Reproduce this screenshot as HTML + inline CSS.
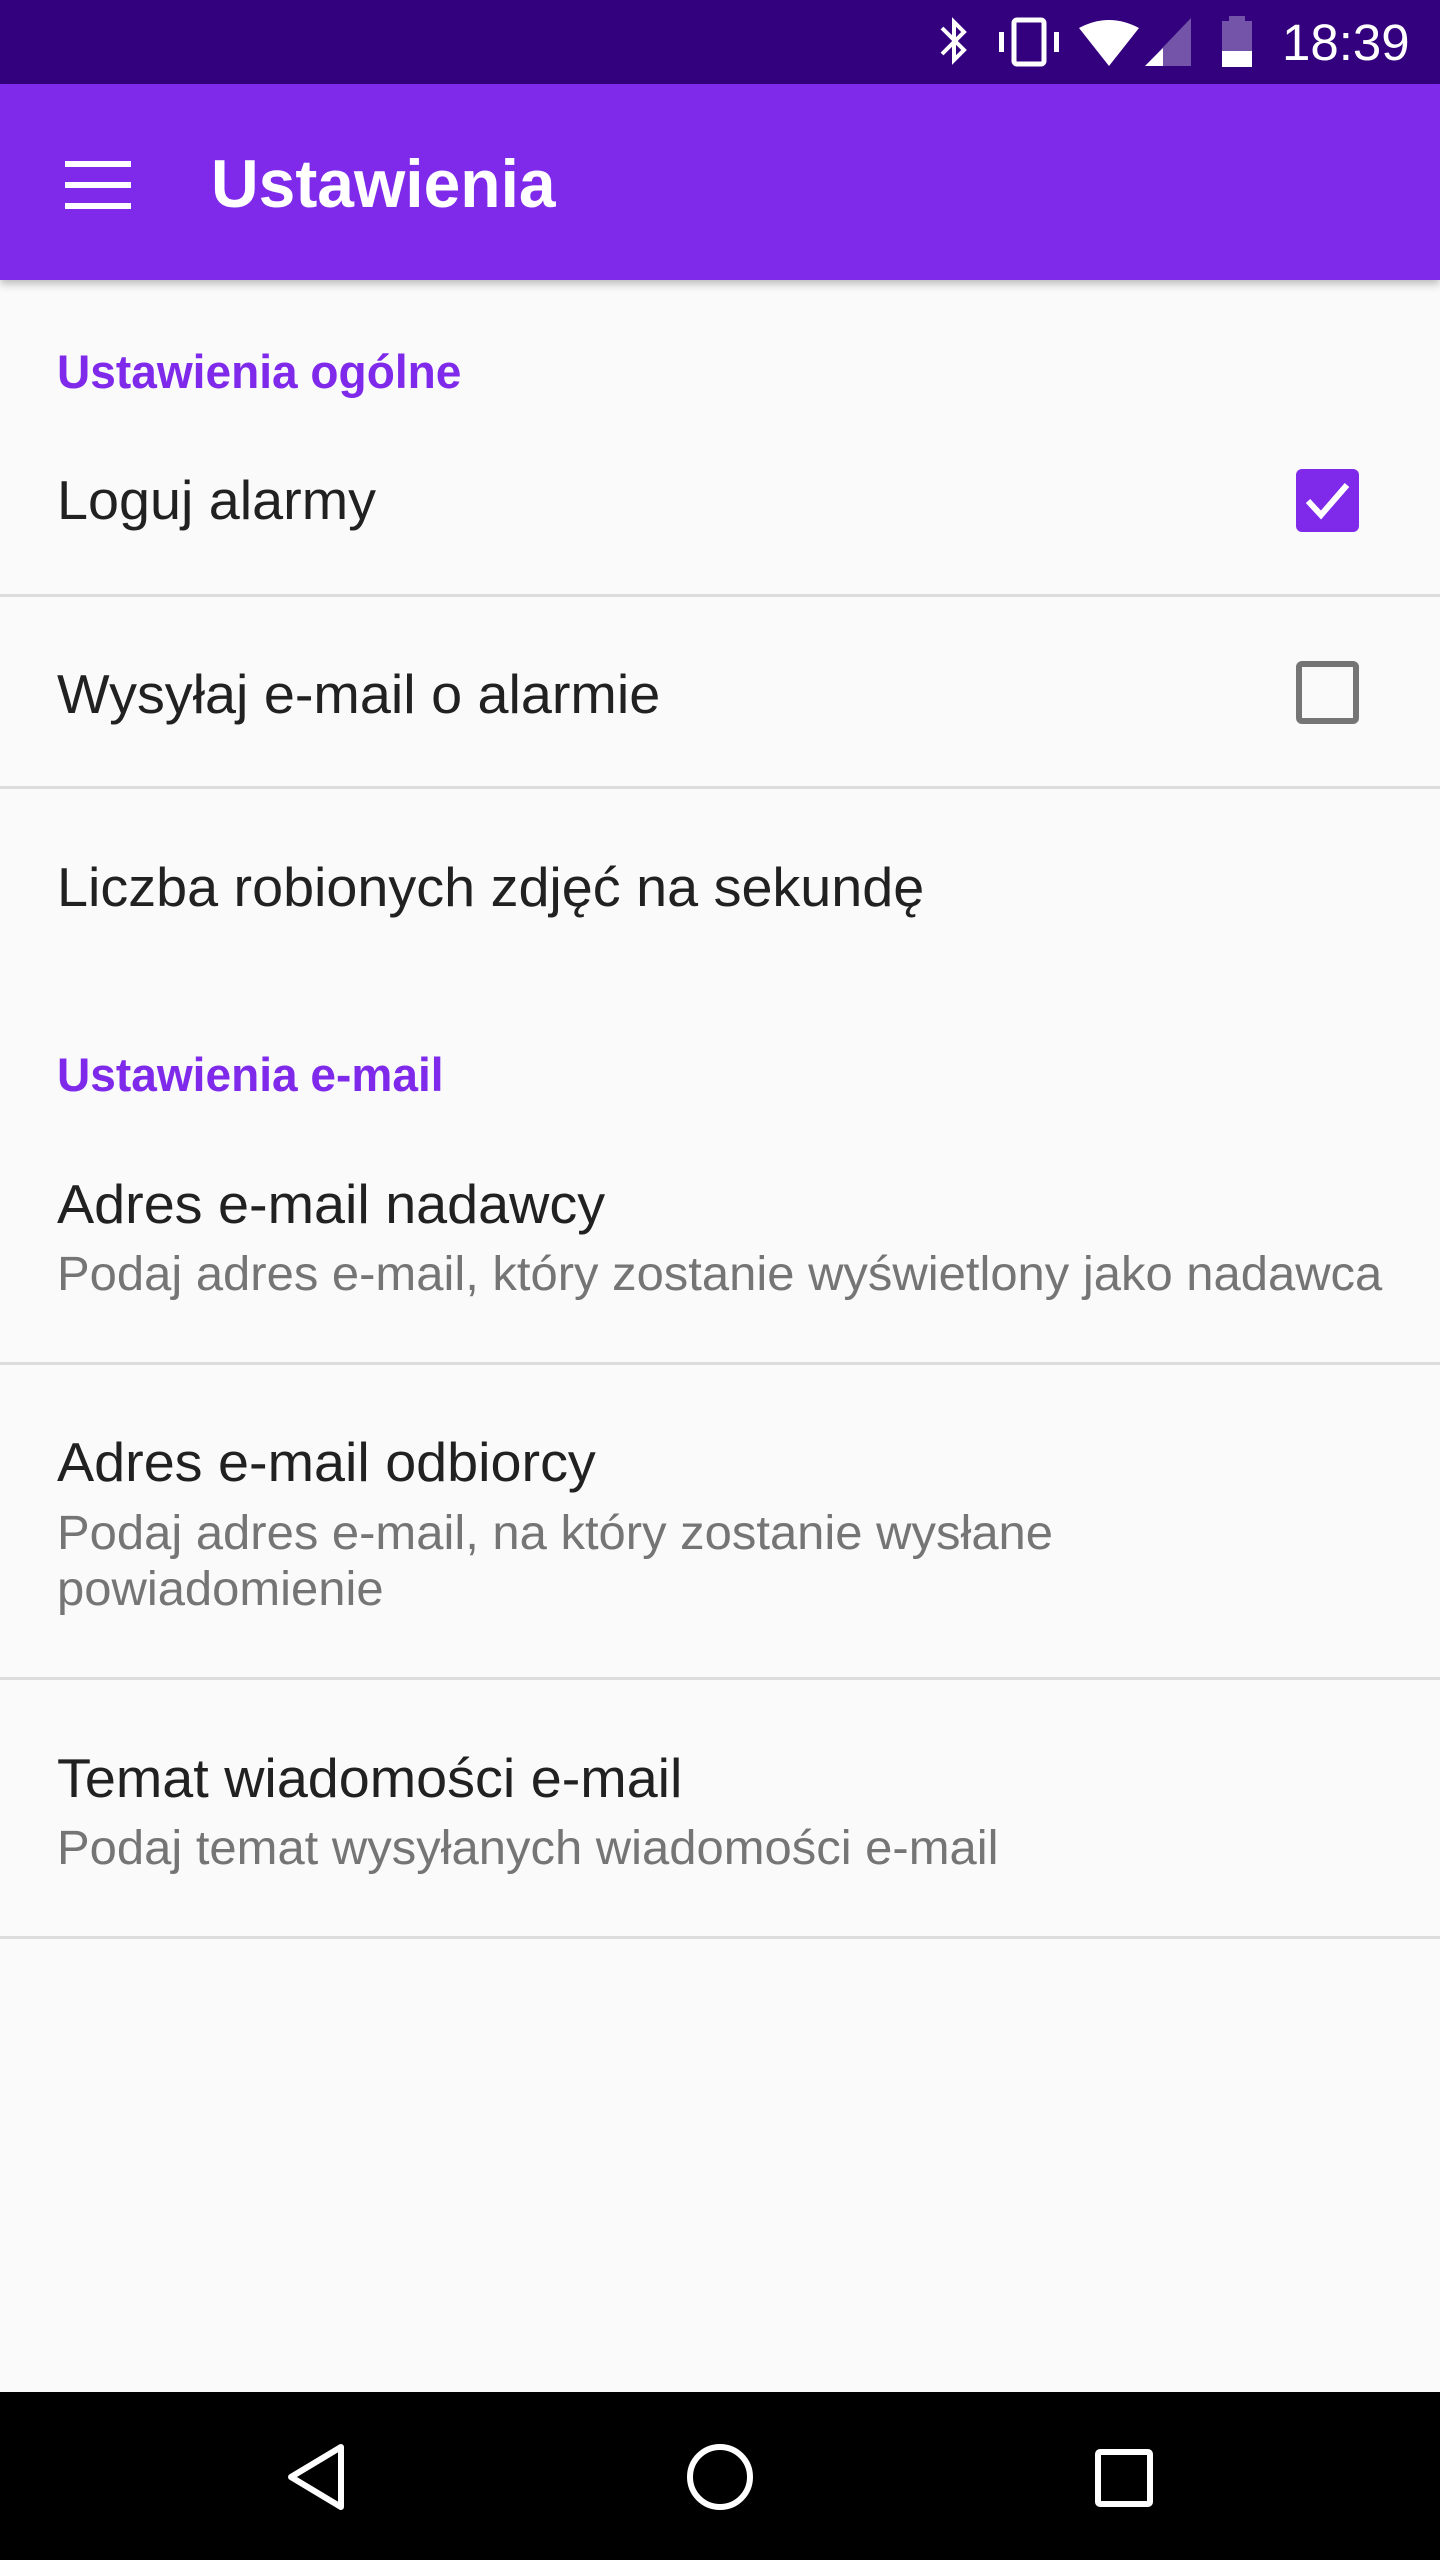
<!DOCTYPE html>
<html><head><meta charset="utf-8"><style>
*{margin:0;padding:0;box-sizing:border-box}
body{width:1440px;height:2560px;background:#fafafa;position:relative;overflow:hidden;font-family:"Liberation Sans",sans-serif}
.sb{position:absolute;left:0;top:0;width:1440px;height:84px;background:#33007e}
.ab{position:absolute;left:0;top:84px;width:1440px;height:196px;background:#7f2aeb;box-shadow:0 4px 8px rgba(0,0,0,.25)}
.t{position:absolute;left:57px;white-space:nowrap;transform-origin:left center;transform:scaleX(1.0);line-height:1}
.p{font-size:55px;color:#212121;transform:scaleX(1.013)}
.s{font-size:48px;color:#757575;transform:scaleX(1.02)}
.c{font-size:47px;color:#7f2aeb;font-weight:bold;transform:scaleX(.98)}
.d{position:absolute;left:0;width:1440px;height:3px;background:#dcdcdc}
.nav{position:absolute;left:0;top:2392px;width:1440px;height:168px;background:#000}
</style></head><body>
<div class="sb">
<svg style="position:absolute;left:934px;top:14px" width="40" height="56" viewBox="0 0 40 56"><path d="M8 14 L30 36 L20 46 L20 8 L30 18 L8 40" stroke="#fff" stroke-width="4" fill="none"/></svg>
<svg style="position:absolute;left:997px;top:16px" width="66" height="52" viewBox="0 0 66 52"><rect x="17" y="4" width="30" height="44" rx="3" stroke="#fff" stroke-width="5" fill="none"/><rect x="2" y="16" width="5" height="20" fill="#fff"/><rect x="57" y="16" width="5" height="20" fill="#fff"/></svg>
<svg style="position:absolute;left:1077px;top:16px" width="64" height="52" viewBox="0 0 64 52"><path d="M2 12 Q32 -4 62 12 L32 50 Z" fill="#fff"/></svg>
<svg style="position:absolute;left:1143px;top:16px" width="50" height="52" viewBox="0 0 50 52"><path d="M48 2 L48 50 L2 50 Z" fill="#7454a8"/><path d="M20 32 L20 50 L2 50 Z" fill="#fff"/></svg>
<svg style="position:absolute;left:1220px;top:14px" width="34" height="56" viewBox="0 0 34 56"><rect x="9" y="2" width="16" height="6" fill="#7454a8"/><rect x="2" y="7" width="30" height="46" fill="#7454a8"/><rect x="2" y="37" width="30" height="16" fill="#fff"/></svg>
<div style="position:absolute;left:1282px;top:17px;font-size:51px;color:#fff;line-height:1">18:39</div>
</div>
<div class="ab">
<div style="position:absolute;left:65px;top:77px;width:66px;height:6px;background:#fff"></div>
<div style="position:absolute;left:65px;top:98px;width:66px;height:6px;background:#fff"></div>
<div style="position:absolute;left:65px;top:119px;width:66px;height:6px;background:#fff"></div>
<div class="t" style="left:211px;top:66px;font-size:68px;color:#fff;font-weight:bold;transform:scaleX(.97)">Ustawienia</div>
</div>
<div class="t c" style="top:348px">Ustawienia ogólne</div>
<div class="t p" style="top:473px">Loguj alarmy</div>
<div style="position:absolute;left:1296px;top:469px;width:63px;height:63px;border-radius:6px;background:#7f2aeb"></div>
<svg style="position:absolute;left:1296px;top:469px" width="63" height="63" viewBox="0 0 63 63"><path d="M12 32 L25 46 L51 16" stroke="#fff" stroke-width="6" fill="none"/></svg>
<div class="d" style="top:594px"></div>
<div class="t p" style="top:667px">Wysyłaj e-mail o alarmie</div>
<div style="position:absolute;left:1296px;top:661px;width:63px;height:63px;border-radius:6px;border:6px solid #757575"></div>
<div class="d" style="top:786px"></div>
<div class="t p" style="top:860px">Liczba robionych zdjęć na sekundę</div>
<div class="t c" style="top:1051px">Ustawienia e-mail</div>
<div class="t p" style="top:1177px">Adres e-mail nadawcy</div>
<div class="t s" style="top:1251px">Podaj adres e-mail, który zostanie wyświetlony jako nadawca</div>
<div class="d" style="top:1362px"></div>
<div class="t p" style="top:1435px">Adres e-mail odbiorcy</div>
<div class="t s" style="top:1510px">Podaj adres e-mail, na który zostanie wysłane</div>
<div class="t s" style="top:1566px">powiadomienie</div>
<div class="d" style="top:1677px"></div>
<div class="t p" style="top:1751px">Temat wiadomości e-mail</div>
<div class="t s" style="top:1825px">Podaj temat wysyłanych wiadomości e-mail</div>
<div class="d" style="top:1936px"></div>
<div class="nav">
<svg style="position:absolute;left:285px;top:50px" width="64" height="70" viewBox="0 0 64 70"><path d="M56 5 L56 65 L6 35 Z" stroke="#fff" stroke-width="6" fill="none" stroke-linejoin="round"/></svg>
<svg style="position:absolute;left:684px;top:49px" width="72" height="72" viewBox="0 0 72 72"><circle cx="36" cy="36" r="30" stroke="#fff" stroke-width="6" fill="none"/></svg>
<svg style="position:absolute;left:1093px;top:55px" width="62" height="62" viewBox="0 0 62 62"><rect x="5" y="5" width="52" height="52" stroke="#fff" stroke-width="6" fill="none" rx="2"/></svg>
</div>
</body></html>
